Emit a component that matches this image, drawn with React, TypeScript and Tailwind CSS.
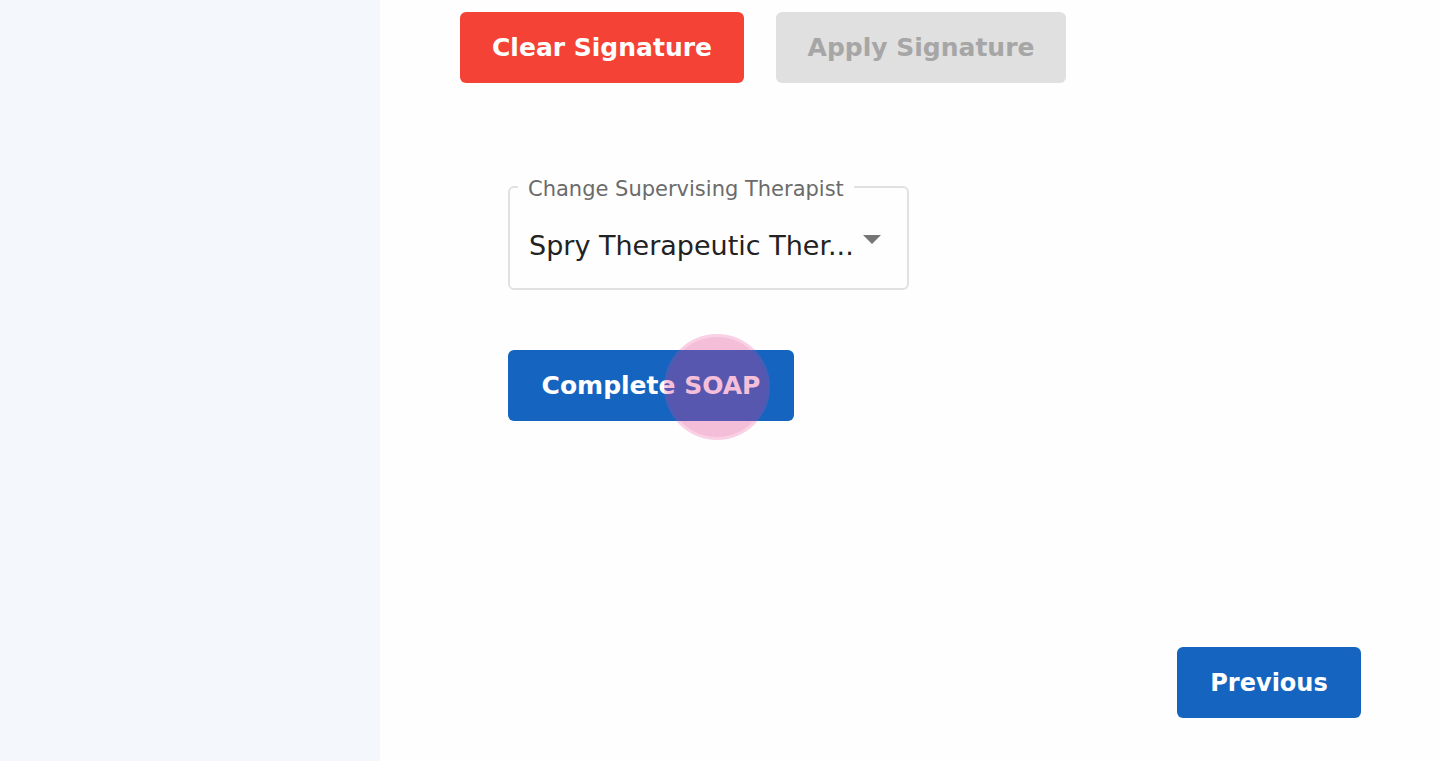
import React from 'react';

const FONT = { fontFamily: '"DejaVu Sans", "Noto Sans", sans-serif' };

function Ripple() {
  return (
    <span className="pointer-events-none absolute left-[156px] top-[-16px] flex h-[106px] w-[106px] items-center justify-center rounded-full bg-[#ec4899]/25">
      <span className="h-[100px] w-[100px] rounded-full bg-[#db2777]/10" />
    </span>
  );
}

export default function App() {
  return (
    <div className="flex h-[761px] w-[1440px] overflow-hidden bg-[#fefefe]" style={FONT}>
      <aside className="h-full w-[380px] shrink-0 bg-[#f4f8fd]" />

      <main className="relative flex flex-1 flex-col">
        <div className="flex gap-8 pl-20 pt-3">
          <button className="flex h-[71px] w-[284px] items-center justify-center rounded-md bg-[#f44336] text-[25px] font-bold text-white">
            Clear Signature
          </button>
          <button className="flex h-[71px] w-[290px] items-center justify-center rounded-md bg-[#e0e0e0] text-[25px] font-bold text-[#a6a6a6]">
            Apply Signature
          </button>
        </div>

        <div className="ml-32 mt-[92px] w-[401px]">
          <fieldset className="relative h-[115px] rounded-md border-2 border-[#e1e1e1] px-[8px]">
            <legend className="px-[10px] text-[21px] leading-6 text-[#6b6b6b]">
              <span className="relative top-[2px]">Change Supervising Therapist</span>
            </legend>
            <div className="flex items-center justify-between pl-[11px] pt-[27px]">
              <span className="text-[27px] text-[#222]">Spry Therapeutic Ther...</span>
              <svg width="18" height="9" viewBox="0 0 18 9" className="mb-[14px] mr-[18px]">
                <path d="M0 0h18L9 9z" fill="#757575" />
              </svg>
            </div>
          </fieldset>
        </div>

        <div className="relative ml-32 mt-[60px] w-[286px]">
          <button className="flex h-[71px] w-[286px] items-center justify-center rounded-md bg-[#1565c0] text-[25px] font-bold text-white">
            Complete SOAP
          </button>
          <Ripple />
        </div>

        <div className="mt-auto flex justify-end pb-[43px] pr-[79px]">
          <button className="flex h-[71px] w-[184px] items-center justify-center rounded-md bg-[#1565c0] text-[24px] font-bold text-white">
            Previous
          </button>
        </div>
      </main>
    </div>
  );
}
